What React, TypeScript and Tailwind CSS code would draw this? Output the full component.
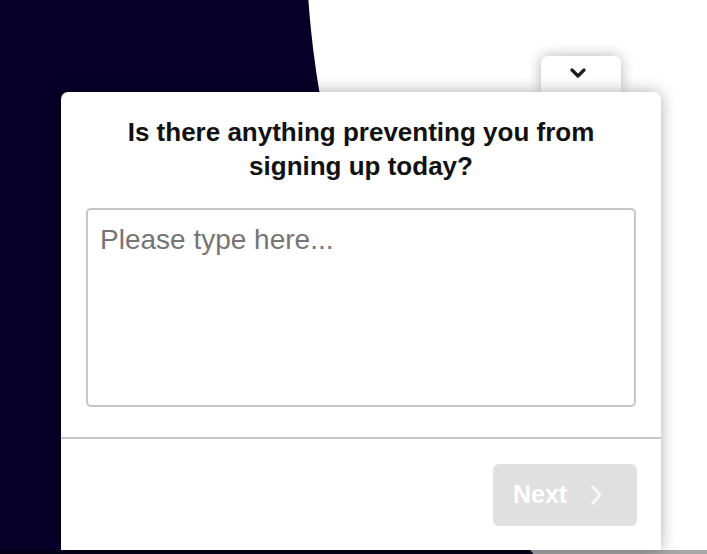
import React from "react";

export default function App() {
  return (
    <div
      className="relative w-[707px] h-[554px] overflow-hidden bg-[#070029]"
      style={{ fontFamily: '"Liberation Sans", Arial, sans-serif' }}
    >
      {/* decorative white circle */}
      <div className="absolute left-[306px] top-[-1032px] w-[1928px] h-[1928px] rounded-full bg-white" />

      <div className="relative flex flex-col pt-[56px] pl-[61px]">
        {/* tab */}
        <div className="flex w-[600px] justify-end pr-[40px]">
          <div className="flex h-[36px] w-[80px] items-center justify-center rounded-t-[7px] bg-white pr-[6px] pb-[2px] shadow-[0_0_14px_rgba(0,0,0,0.3)]">
            <svg width="16" height="10" viewBox="0 0 16 10" fill="none">
              <polyline
                points="2,2 8,8 14,2"
                stroke="#1e1e1e"
                strokeWidth="3.2"
                strokeLinecap="round"
                strokeLinejoin="round"
              />
            </svg>
          </div>
        </div>

        {/* card */}
        <div className="relative z-10 flex h-[458px] w-[600px] flex-col rounded-t-[7px] bg-white shadow-[0_0_16px_rgba(0,0,0,0.32)]">
          <div className="flex flex-col px-[25px] pt-[23px]">
            <h1 className="text-center text-[26px] font-bold leading-[34px] text-[#111111]">
              Is there anything preventing you from
              <br />
              signing up today?
            </h1>
            <textarea
              className="mt-[25px] h-[199px] w-[550px] resize-none rounded-[5px] border-2 border-[#c6c6c6] px-[12px] pt-[14px] pb-[12px] text-[28px] leading-[1.15] text-[#333] outline-none placeholder:text-[#757575]"
              style={{ fontFamily: '"Liberation Sans", Arial, sans-serif' }}
              placeholder="Please type here..."
            />
          </div>
          <div className="mt-[30px] h-[2px] w-full bg-[#c4c4c4]" />
          <div className="flex justify-end pr-[24px] pt-[25px]">
            <button className="flex h-[62px] w-[144px] items-center rounded-[6px] bg-[#e0e0e0] pl-[20px] text-[25px] font-bold text-white">
              <span>Next</span>
              <svg className="ml-[24px]" width="12" height="20" viewBox="0 0 12 20" fill="none">
                <polyline
                  points="2,2 9,10 2,18"
                  stroke="#f7f7f7"
                  strokeWidth="3"
                  strokeLinecap="round"
                  strokeLinejoin="round"
                />
              </svg>
            </button>
          </div>
        </div>
      </div>

      {/* bottom darkened strip */}
      <div className="absolute bottom-0 left-0 h-[4px] w-full bg-black/35" />
    </div>
  );
}
